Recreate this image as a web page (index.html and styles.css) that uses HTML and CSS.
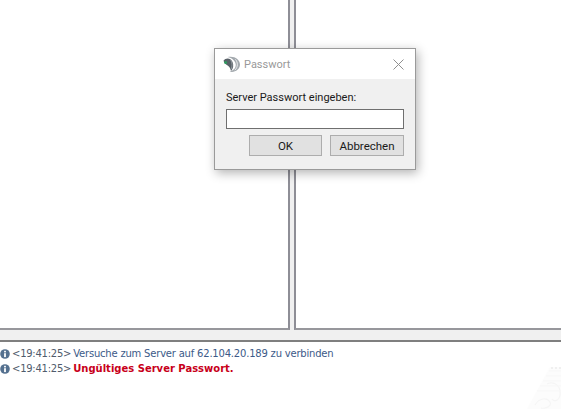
FILE: index.html
```html
<!DOCTYPE html>
<html lang="de">
<head>
    <meta charset="UTF-8">
    <title>Passwort</title>
    <link rel="stylesheet" href="styles.css">
</head>
<body>
    <div class="panes">
        <div class="pane pane-left"></div>
        <div class="pane pane-right"></div>
    </div>
    <div class="log">
        <div class="log-row">
            <svg class="info" viewBox="0 0 10 10"><circle cx="5" cy="5" r="4.8" fill="#54708f"/><rect x="4.1" y="4.2" width="1.8" height="3.9" fill="#fff"/><rect x="4.1" y="1.8" width="1.8" height="1.6" fill="#fff"/></svg>
            <span class="time">&lt;19:41:25&gt;</span>
            <span class="msg">Versuche zum Server auf 62.104.20.189 zu verbinden</span>
        </div>
        <div class="log-row">
            <svg class="info" viewBox="0 0 10 10"><circle cx="5" cy="5" r="4.8" fill="#54708f"/><rect x="4.1" y="4.2" width="1.8" height="3.9" fill="#fff"/><rect x="4.1" y="1.8" width="1.8" height="1.6" fill="#fff"/></svg>
            <span class="time">&lt;19:41:25&gt;</span>
            <span class="msg-error">Ungültiges Server Passwort.</span>
        </div>
        <svg class="watermark" viewBox="0 0 34 42">
            <path d="M0 42 L23 0 H34 V42 Z" fill="#fcfcfc"/>
            <path d="M8 38 C12 31 20 30 23 35 C25 39 19 42 14 41 M20 17 C27 14 34 18 33 28 C32 34 27 35 25 32" fill="none" stroke="#f5f5f5" stroke-width="1.2"/>
            <path d="M22 4 H34 M19 9 H34 M16 14 H34 M13 19 H34 M10 24 H34" stroke="#f7f7f7" stroke-width="1"/>
            <path d="M24 1 H26 M28 1 H30 M32 1 H34" stroke="#e4e4e4" stroke-width="1"/>
        </svg>
    </div>

    <div class="dialog">
        <div class="dialog-title">
            <svg class="logo" viewBox="0 0 18 18">
                <path d="M5 1 C12 -0.5 18 3.5 18 9 C18 14.5 12 18 7 16.5 C12 15 14 12 13.4 8.5 C13 5 9.5 2 5 1 Z" fill="#a3a9ae"/>
                <path d="M0.5 5 C3 1.5 8 2 10 6 C11.5 9.5 11 13 8.5 16 C8 13 6.5 11 4.5 9.8 C2.8 8.8 1.4 7.2 0.5 5 Z" fill="#596168"/>
                <path d="M13 3.5 C16 6.5 16 12 12.5 15" fill="none" stroke="#fff" stroke-width="0.8"/>
                <path d="M8 4 C10 7 10 11 8.5 14" fill="none" stroke="#aeb4b9" stroke-width="0.7"/>
                <circle cx="2.8" cy="7" r="1.6" fill="#2f9a5e"/>
            </svg>
            <span class="dialog-name">Passwort</span>
            <svg class="close" viewBox="0 0 11 11"><path d="M0.5 0.5 L10.5 10.5 M10.5 0.5 L0.5 10.5" stroke="#8f8f8f" stroke-width="1" fill="none"/></svg>
        </div>
        <div class="dialog-body">
            <div class="prompt">Server Passwort eingeben:</div>
            <input class="field" type="password">
            <div class="buttons">
                <button class="btn btn-ok">OK</button>
                <button class="btn">Abbrechen</button>
            </div>
        </div>
    </div>
</body>
</html>
```

FILE: styles.css
```css
body {
    margin: 0;
    height: 409px;
    overflow: hidden;
    background-color: #fff;
    font-family: Roboto, "Liberation Sans", sans-serif;
    font-size: 11px;
    display: flex;
    flex-direction: column;
}
.panes {
    height: 330px;
    display: flex;
    gap: 4px;
    background-color: #f0f0f0;
    border-bottom: 10px solid #f0f0f0;
}
.pane {
    background-color: #fff;
    border-bottom: 2px solid #97979c;
}
.pane-left {
    width: 288px;
    border-right: 2px solid #8e8e96;
}
.pane-right {
    flex: 1;
    border-left: 2px solid #8e8e96;
}
.log {
    flex: 1;
    position: relative;
    border-top: 2px solid #7f7f7f;
    padding-top: 4px;
    font-family: "DejaVu Sans", sans-serif;
    font-size: 10px;
}
.log-row {
    height: 15px;
    display: flex;
    align-items: center;
    color: #4f5b6b;
    white-space: nowrap;
}
.info {
    width: 10px;
    height: 10px;
    margin-right: 2px;
}
.time {
    margin-right: 2px;
    letter-spacing: -0.25px;
}
.msg {
    color: #3c5a88;
    letter-spacing: -0.2px;
}
.msg-error {
    color: #c8001a;
    font-weight: bold;
}
.watermark {
    position: absolute;
    right: 0;
    bottom: 0;
    width: 34px;
    height: 42px;
}
.dialog {
    position: absolute;
    left: 214px;
    top: 48px;
    width: 200px;
    height: 120px;
    border: 1px solid #9a9a9a;
    background-color: #f0f0f0;
    box-shadow: 2px 3px 10px rgba(0, 0, 0, 0.3);
    display: flex;
    flex-direction: column;
}
.dialog-title {
    height: 30px;
    background-color: #fff;
    display: flex;
    align-items: center;
    padding: 0 11px 0 8px;
}
.logo {
    width: 17px;
    height: 17px;
    margin-right: 4px;
}
.dialog-name {
    flex: 1;
    color: #999;
}
.close {
    width: 11px;
    height: 11px;
}
.dialog-body {
    flex: 1;
    padding: 10px 11px;
    display: flex;
    flex-direction: column;
}
.prompt {
    color: #1a1a1a;
    height: 20px;
    line-height: 17px;
}
.field {
    box-sizing: border-box;
    height: 20px;
    width: 178px;
    border: 1px solid #6f6f6f;
    background-color: #fff;
    margin: 0;
    padding: 0;
}
.buttons {
    display: flex;
    justify-content: flex-end;
    gap: 8px;
    margin-top: 6px;
}
.btn {
    width: 74px;
    height: 21px;
    border: 1px solid #adadad;
    background-color: #e1e1e1;
    color: #1a1a1a;
    font-family: inherit;
    font-size: 11.5px;
    padding: 0;
}
.btn-ok {
    width: 73px;
}
```
